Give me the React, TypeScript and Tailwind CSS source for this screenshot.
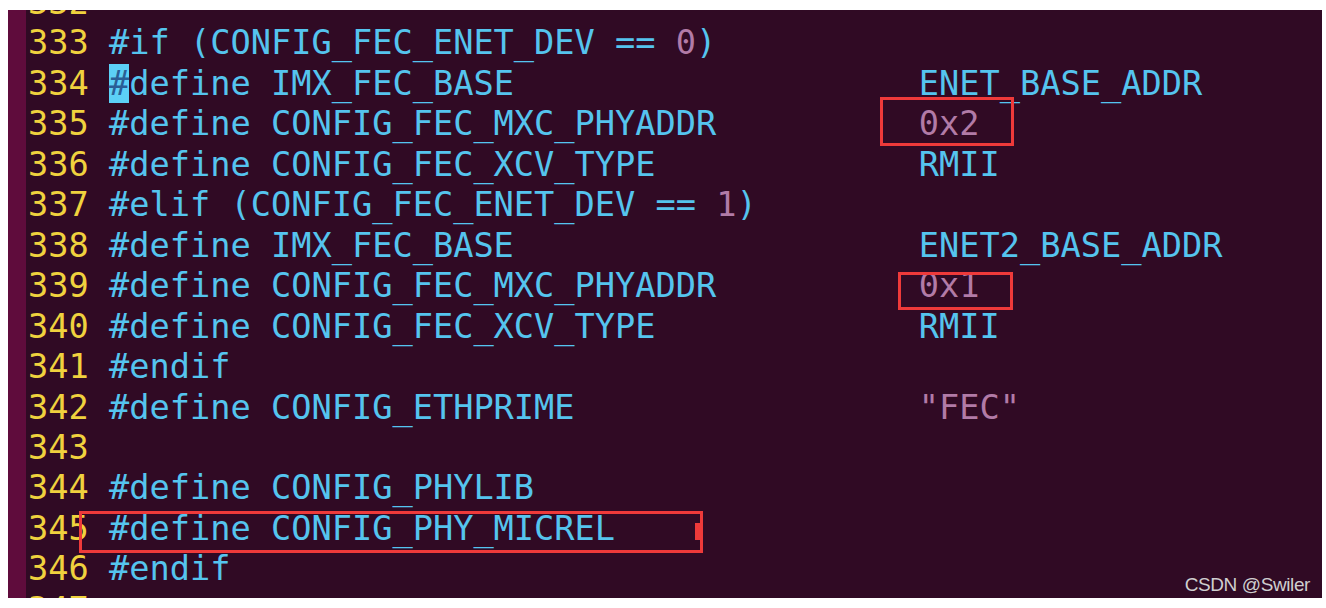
import React from "react";

type Seg = { t: string; c?: "pre" | "num" | "cur" };
type Line = { n: string; segs: Seg[] };

const pad = (s: string, w = 40) => s + " ".repeat(Math.max(0, w - s.length));

const lines: Line[] = [
  { n: "332", segs: [] },
  {
    n: "333",
    segs: [
      { t: "#if (CONFIG_FEC_ENET_DEV == " },
      { t: "0", c: "num" },
      { t: ")" },
    ],
  },
  {
    n: "334",
    segs: [
      { t: "#", c: "cur" },
      { t: pad("define IMX_FEC_BASE", 39) + "ENET_BASE_ADDR" },
    ],
  },
  { n: "335", segs: [{ t: pad("#define CONFIG_FEC_MXC_PHYADDR") }, { t: "0x2", c: "num" }] },
  { n: "336", segs: [{ t: pad("#define CONFIG_FEC_XCV_TYPE") + "RMII" }] },
  {
    n: "337",
    segs: [
      { t: "#elif (CONFIG_FEC_ENET_DEV == " },
      { t: "1", c: "num" },
      { t: ")" },
    ],
  },
  { n: "338", segs: [{ t: pad("#define IMX_FEC_BASE") + "ENET2_BASE_ADDR" }] },
  { n: "339", segs: [{ t: pad("#define CONFIG_FEC_MXC_PHYADDR") }, { t: "0x1", c: "num" }] },
  { n: "340", segs: [{ t: pad("#define CONFIG_FEC_XCV_TYPE") + "RMII" }] },
  { n: "341", segs: [{ t: "#endif" }] },
  { n: "342", segs: [{ t: pad("#define CONFIG_ETHPRIME") }, { t: '"FEC"', c: "num" }] },
  { n: "343", segs: [] },
  { n: "344", segs: [{ t: "#define CONFIG_PHYLIB" }] },
  { n: "345", segs: [{ t: "#define CONFIG_PHY_MICREL" }] },
  { n: "346", segs: [{ t: "#endif" }] },
  { n: "347", segs: [] },
];

const segClass = (c?: Seg["c"]) => {
  if (c === "num") return "text-[#b27ba7]";
  if (c === "cur") return "bg-[#5cd0f6] text-[#2a5e96]";
  return "text-[#55c4ee]";
};

const App = () => {
  return (
    <div className="bg-white w-[1326px] h-[608px] pt-[10px] pl-[8px] overflow-hidden">
      <div className="relative flex w-[1314px] h-[588px] bg-[#300a24] overflow-hidden">
        <div className="w-[18px] shrink-0 bg-[#5f0c3c]" />
        <div
          className="flex-1 pl-[2px] -mt-[27px] text-[33.63px] leading-[40.46px] whitespace-pre"
          style={{ fontFamily: '"DejaVu Sans Mono", "Liberation Mono", monospace' }}
        >
          {lines.map((l) => (
            <div key={l.n} className="h-[40.46px]">
              <span className="text-[#f0d23e]">{l.n} </span>
              {l.segs.map((s, i) => (
                <span key={i} className={segClass(s.c)}>
                  {s.t}
                </span>
              ))}
            </div>
          ))}
        </div>

        {/* red annotation boxes */}
        <div className="absolute left-[872px] top-[87px] w-[134px] h-[49px] border-[3px] border-[#ee3a3a]" />
        <div className="absolute left-[890px] top-[262px] w-[115px] h-[38px] border-[3px] border-[#ee3a3a]" />
        <div className="absolute left-[71px] top-[501px] w-[624px] h-[42px] border-[3px] border-[#ee3a3a]" />
        <div className="absolute left-[687px] top-[513px] w-[5px] h-[17px] bg-[#ee3a3a]" />

        <div
          className="absolute right-[12px] bottom-[-1px] text-[19px] tracking-[-0.4px] text-[#cfcfcf]"
          style={{ fontFamily: '"Liberation Sans", Arial, sans-serif' }}
        >
          CSDN @Swiler
        </div>
      </div>
    </div>
  );
};

export default App;
